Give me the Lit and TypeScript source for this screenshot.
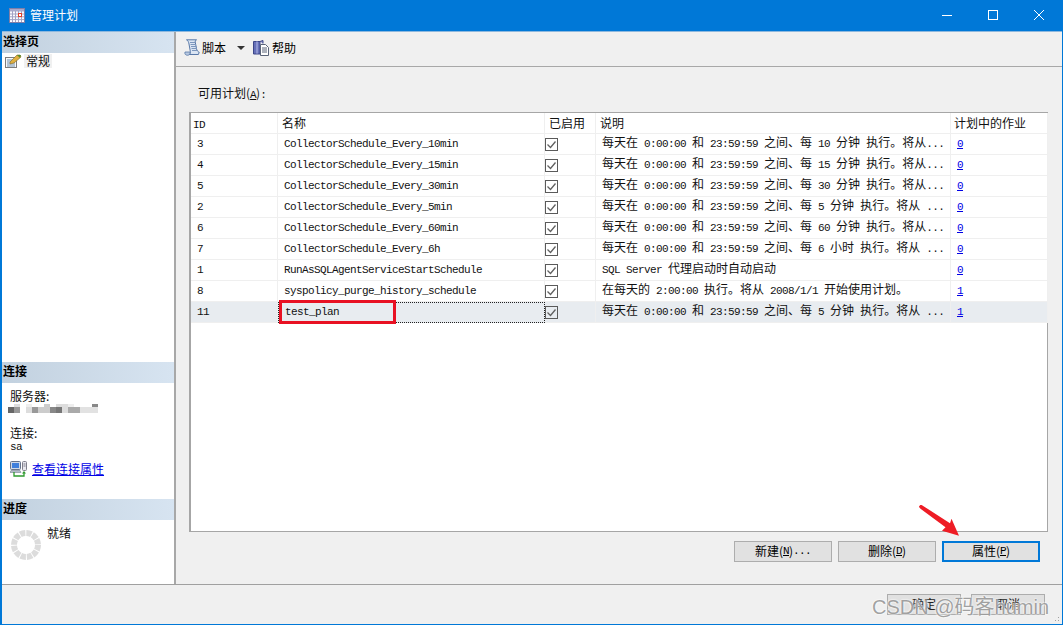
import { LitElement, html, css, svg } from "lit";
import { customElement } from "lit/decorators.js";

const t = (s: string) =>
  s.split(/([\x00-\x7f]+)/).filter(Boolean).map((p) =>
    /^[\x00-\x7f]/.test(p) ? html`<span class="lat">${p}</span>` : html`<span>${p}</span>`);

const rows = [
  ["3", "CollectorSchedule_Every_10min", "每天在 0:00:00 和 23:59:59 之间、每 10 分钟 执行。将从...", "0"],
  ["4", "CollectorSchedule_Every_15min", "每天在 0:00:00 和 23:59:59 之间、每 15 分钟 执行。将从...", "0"],
  ["5", "CollectorSchedule_Every_30min", "每天在 0:00:00 和 23:59:59 之间、每 30 分钟 执行。将从...", "0"],
  ["2", "CollectorSchedule_Every_5min", "每天在 0:00:00 和 23:59:59 之间、每 5 分钟 执行。将从 ...", "0"],
  ["6", "CollectorSchedule_Every_60min", "每天在 0:00:00 和 23:59:59 之间、每 60 分钟 执行。将从...", "0"],
  ["7", "CollectorSchedule_Every_6h", "每天在 0:00:00 和 23:59:59 之间、每 6 小时 执行。将从 ...", "0"],
  ["1", "RunAsSQLAgentServiceStartSchedule", "SQL Server 代理启动时自动启动", "0"],
  ["8", "syspolicy_purge_history_schedule", "在每天的 2:00:00 执行。将从 2008/1/1 开始使用计划。", "1"],
  ["11", "test_plan", "每天在 0:00:00 和 23:59:59 之间、每 5 分钟 执行。将从 ...", "1"],
];

const blurTop = ["#fff","#ddd","#fff","#eee","#fff","#fff","#ccc","#fff","#ddd","#ddd","#eee","#fff","#fff","#fff","#888"];
const blurBottom = ["#666","#999","#fff","#ddd","#999","#ccc","#ccc","#888","#777","#ddd","#aaa","#aaa","#e2e2e2","#e2e2e2","#e2e2e2"];

const calendarIcon = svg`<svg width="16" height="15" viewBox="0 0 16 15">
  <rect x="0.5" y="0.5" width="15" height="14" fill="#fbfbff" stroke="#7f7fa8"/>
  <rect x="1" y="1" width="14" height="2.5" fill="#a9a9cc"/>
  <path d="M3.5 3v11M6.5 3v11M9.5 3v11M12.5 3v11M1 6h14M1 8.8h14M1 11.6h14" stroke="#a3a3c4" fill="none"/>
  <rect x="9.5" y="5.5" width="3" height="3" fill="#fff" stroke="#e0402a"/>
</svg>`;
const generalIcon = svg`<svg width="17" height="14" viewBox="0 0 17 14">
  <rect x="0.5" y="3.5" width="11" height="10" fill="#f8f8f8" stroke="#7c7c7c"/>
  <path d="M2 6h8M2 8h8M2 10h8M2 12h8" stroke="#6f8fb0"/>
  <path d="M5 8l7-7 3 0 1 2-7 6-4 1z" fill="#e0b040" stroke="#80682a" stroke-width=".6"/>
  <path d="M12 1l4 0-1 3z" fill="#5a8c2a"/>
</svg>`;
const scrollIcon = svg`<svg width="17" height="17" viewBox="0 0 17 17">
  <path d="M2.5 .8h10c-1.3.6-1.5 1.8-1.1 3.2l1.2 6c.3 1.6 1.1 2.6 2.6 3.2l-.8 2.3H4.5c1.4-.3 2.1-1.6 1.8-3.2L5 5C4.7 3.4 4.2 1.500 2.500.8z" fill="#dbe5f3" stroke="#5878a8"/>
  <path d="M6 3.500h5.500M6.500 5.500h5.500M7 7.500h5.500M7.500 9.500h5.500M8 11.500h5.500" stroke="#7d97bd" fill="none"/>
  <path d="M3.500 16.300c1.800 0 3-1.500 2.600-3.300H1c-.6 1.800.5 3.300 2.500 3.300z" fill="#b7c8e0" stroke="#5878a8" stroke-width=".8"/>
</svg>`;
const helpIcon = svg`<svg width="16" height="16" viewBox="0 0 16 16">
  <path d="M.5 1.500h6.500v12.500H.5z" fill="#6670b8" stroke="#3d4688"/>
  <path d="M7 1.500l3-1v3" fill="#8890cc" stroke="#3d4688"/>
  <rect x="3" y="1.500" width="2" height="12" fill="#8d95d0"/>
  <path d="M7.500 4.500h5l3 3v8h-8z" fill="#fff" stroke="#5a6478"/>
  <path d="M9 8h5M9 10h5M9 12h5" stroke="#5a6478"/>
</svg>`;
const connIcon = svg`<svg width="17" height="16" viewBox="0 0 17 16">
  <rect x="0.5" y="0.5" width="10" height="8" rx="1" fill="#cfd8e6" stroke="#66738a"/>
  <rect x="2" y="2" width="7" height="5" fill="#3e7fdc"/>
  <path d="M1 9.500h9l1 2H0z" fill="#b3bcc9" stroke="#7a8494" stroke-width=".6"/>
  <rect x="12.500" y="0.500" width="4" height="9" rx="1" fill="#e8e8ee" stroke="#80808c"/>
  <path d="M13.500 3h2M13.500 5h2" stroke="#7a7a88"/>
  <path d="M4 11v4h10v-3" fill="none" stroke="#2f9a2f" stroke-width="1.300"/>
  <path d="M12 12.500l2-2.500 2 2.500z" fill="#2f9a2f"/>
</svg>`;

@customElement("app-root")
export class AppRoot extends LitElement {
  static styles = css`
    :host { display: block; }
    * { box-sizing: border-box; }
    .win {
      position: relative; width: 1063px; height: 625px; display: flex; flex-direction: column;
      background: #f0f0f0; border: solid #0078d7; border-width: 0 1px 1px 2px; overflow: hidden;
      font: 12px/14px "Noto Sans CJK SC", "Liberation Sans", sans-serif; color: #111;
    }
    .lat { font: 11px/14px "Liberation Mono", monospace; letter-spacing: -0.6px; white-space: pre; }
    .title { height: 32px; margin-left: -2px; margin-right: -1px; background: #0078d7; color: #fff; display: flex; align-items: center; padding: 0 1px 1px 9px; flex: none; border-bottom: 1px solid #8db8de; }
    .title .name { margin-left: 5px; font-size: 12px; }
    .ctrls { margin-left: auto; display: flex; align-items: center; }
    .ctrl { width: 46px; height: 30px; display: flex; align-items: center; justify-content: center; }
    .main { flex: 1; display: flex; min-height: 0; border-bottom: 1px solid #a0a0a0; }
    .left { width: 174px; flex: none; background: #fff; border-right: 2px solid #a8a8a8; display: flex; flex-direction: column; }
    .head { height: 21px; flex: none; background: linear-gradient(90deg, #c2d1df, #d7e4f1); font-weight: 700; font-size: 12px; line-height: 18px; padding-left: 1px; color: #000; }
    .s1 { height: 330px; flex: none; }
    .s2 { height: 137px; flex: none; }
    .s3 { flex: 1; }
    .item { display: flex; align-items: center; height: 15px; padding-left: 3px; }
    .item span.lbl { background: #f0f0f0; padding: 0 2px; margin-left: 2px; }
    .conn { padding: 6px 0 0 8px; }
    .blur { display: grid; grid-template-columns: repeat(15, 6px); grid-template-rows: 3px 6px; margin: 1px 0 0 -2px; }
    .c2 { margin-top: 13px; }
    .sa { display: block; line-height: 9px; height: 9px; margin-top: 3px; }
    .link { display: flex; align-items: center; gap: 5px; margin-top: 9px; color: #0000e6; text-decoration: underline; }
    .link span { color: #0000e6; }
    .prog { display: flex; padding: 6px 0 0 8px; align-items: flex-start; }
    .prog svg { margin-top: 3px; flex: none; }
    .prog .txt { margin-left: 5px; }
    .right { flex: 1; min-width: 0; display: flex; flex-direction: column; }
    .tb { height: 35px; flex: none; border-bottom: 1px solid #a8a8a8; display: flex; align-items: center; padding: 0 0 3px 8px; color: #000; }
    .tb svg { flex: none; }
    .tb .l { margin-left: 1px; }
    .tb .l.h2 { margin-left: 3px; }
    .caret { width: 0; height: 0; border: 4px solid transparent; border-top-color: #333; border-bottom: 0; margin: 0 8px 0 11px; }
    .content { flex: 1; display: flex; flex-direction: column; padding: 19px 14px 22px 13px; min-height: 0; }
    .lbl-top { height: 14px; margin: 0 0 12px 9px; }
    .grid { height: 420px; flex: none; background: #fff; border: 1px solid #a6a6a6; border-left-width: 2px; display: grid; grid-template-columns: 87px 267px 51px 355px 97px; grid-auto-rows: 21px; align-content: start; }
    .c { border: solid #efefef; border-width: 0 1px 1px 0; padding: 1px 0 0 6px; white-space: pre; overflow: hidden; }
    .h { height: 21px; padding: 3px 0 0 4px; }
    .h.id { padding-left: 2px; }
    .h.last { padding-left: 3px; }
    .sel { background: #e8ecf0; }
    .focus { border: 1px dotted #222; padding: 0 0 0 6px; }
    .ck { width: 13px; height: 13px; border: 1px solid #5a5a5a; display: block; background: #fff; }
    .sel .ck { background: transparent; }
    .ckc { padding: 4px 0 0 0; }
    a { color: #0000e6; text-decoration: underline; }
    .btns { display: flex; justify-content: flex-end; gap: 6px; margin: 9px 8px 0 0; }
    .btn { width: 98px; height: 21px; padding-bottom: 1px; background: #e1e1e1; border: 1px solid #adadad; display: flex; align-items: center; justify-content: center; color: #000; }
    .btn.pri { border: 2px solid #0078d7; }
    u { text-decoration: underline; }
    .foot { height: 39px; flex: none; display: flex; justify-content: flex-end; gap: 10px; padding: 9px 17px 0 0; }
    .foot .btn { width: 74px; height: 21px; color: #222; }
    .grip { position: absolute; right: 1px; bottom: 1px; width: 10px; height: 10px; background-image: radial-gradient(#a0a0a0 40%, transparent 45%); background-size: 3px 3px; clip-path: polygon(100% 0, 100% 100%, 0 100%); }
    .redbox { position: absolute; left: 277px; top: 300px; width: 117px; height: 24px; border: 3px solid #e81123; pointer-events: none; }
    .arrow { position: absolute; left: -2px; top: 0; pointer-events: none; }
    .wm { position: absolute; left: 870px; top: 595px; font: 20px/24px "Liberation Sans", "Noto Sans CJK SC", sans-serif; color: rgba(125,125,125,.72); text-shadow: 0 0 2px #fff, 0 0 2px #fff; white-space: nowrap; pointer-events: none; }
  `;

  render() {
    return html`<div class="win">
      <div class="title">
        ${calendarIcon}<span class="name">管理计划</span>
        <div class="ctrls">
          <div class="ctrl"><svg width="10" height="10" viewBox="0 0 10 10"><path d="M0 5.500h10" stroke="#fff"/></svg></div>
          <div class="ctrl"><svg width="10" height="10" viewBox="0 0 10 10"><rect x=".5" y=".5" width="9" height="9" fill="none" stroke="#fff"/></svg></div>
          <div class="ctrl"><svg width="10" height="10" viewBox="0 0 10 10"><path d="M0 0l10 10M10 0L0 10" stroke="#fff"/></svg></div>
        </div>
      </div>
      <div class="main">
        <div class="left">
          <div class="s1">
            <div class="head">选择页</div>
            <div class="item">${generalIcon}<span class="lbl">常规</span></div>
          </div>
          <div class="s2">
            <div class="head">连接</div>
            <div class="conn">
              <div>服务器:</div>
              <div class="blur">${blurTop.map((c) => html`<i style="background:${c}"></i>`)}${blurBottom.map((c) => html`<i style="background:${c}"></i>`)}</div>
              <div class="c2">连接:</div>
              <div class="sa lat">sa</div>
              <div class="link">${connIcon}<span>查看连接属性</span></div>
            </div>
          </div>
          <div class="s3">
            <div class="head">进度</div>
            <div class="prog">
              <svg width="32" height="32" viewBox="0 0 32 32"><circle cx="16" cy="16" r="12" fill="none" stroke="#dcdcdc" stroke-width="6" stroke-dasharray="5.280 1"/></svg>
              <span class="txt">就绪</span>
            </div>
          </div>
        </div>
        <div class="right">
          <div class="tb">
            ${scrollIcon}<span class="l">脚本</span><span class="caret"></span>${helpIcon}<span class="l h2">帮助</span>
          </div>
          <div class="content">
            <div class="lbl-top">可用计划(<u class="lat">A</u>)<span class="lat">:</span></div>
            <div class="grid">
              <div class="c h id">${t("ID")}</div><div class="c h">名称</div><div class="c h">已启用</div><div class="c h">说明</div><div class="c h last">计划中的作业</div>
              ${rows.map((r, i) => {
                const last = i === rows.length - 1;
                return html`
                  <div class="c ${last ? "sel" : ""}">${t(r[0])}</div>
                  <div class="c ${last ? "sel focus" : ""}">${t(r[1])}</div>
                  <div class="c ckc ${last ? "sel" : ""}"><span class="ck"><svg width="11" height="11" viewBox="0 0 11 11" style="display:block"><path d="M1.500 5.500l3 3 5-6" fill="none" stroke="#606060" stroke-width="1.300"/></svg></span></div>
                  <div class="c ${last ? "sel" : ""}">${t(r[2])}</div>
                  <div class="c ${last ? "sel" : ""}"><a>${t(r[3])}</a></div>`;
              })}
            </div>
            <div class="btns">
              <div class="btn">新建(<u class="lat">N</u>)<span class="lat">...</span></div>
              <div class="btn">删除(<u class="lat">D</u>)</div>
              <div class="btn pri">属性(<u class="lat">P</u>)</div>
            </div>
          </div>
        </div>
      </div>
      <div class="foot">
        <div class="btn">确定</div>
        <div class="btn">取消</div>
      </div>
      <div class="grip"></div>
      <div class="redbox"></div>
      <svg class="arrow" width="1063" height="625" viewBox="0 0 1063 625">
        <path d="M919 506.500c.6-1.500 1.800-2 3-1.300l28 18 1.500-4.500 7.500 17-17-5 3.500-3.500-25-18.500c-1-.8-1.500-1.500-1.500-2.200z" fill="#ee1c25"/>
      </svg>
      <div class="wm">CSDN @码客humin</div>
    </div>`;
  }
}
